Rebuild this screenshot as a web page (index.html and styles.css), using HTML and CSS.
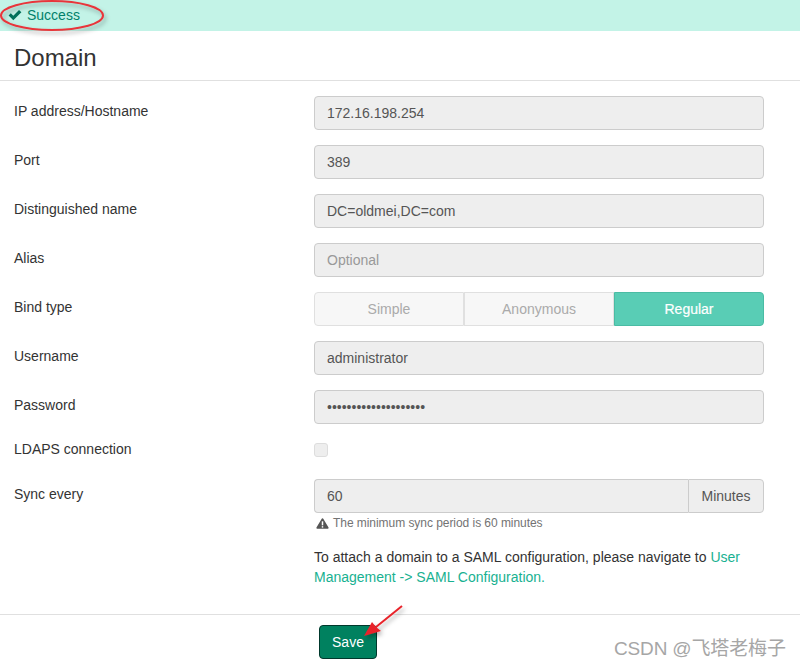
FILE: index.html
```html
<!DOCTYPE html>
<html lang="en">
<head>
<meta charset="utf-8">
<title>Domain</title>
<link rel="stylesheet" href="styles.css">
</head>
<body>
<div class="alert">
  <svg class="check" viewBox="0 0 14 12" width="14" height="12"><path d="M0.6 6.5 L2.8 4.3 L5.3 6.8 L11 1 L13.4 3.2 L5.3 11.2 Z" fill="#00715a"/></svg>
  <span>Success</span>
</div>
<h1 class="title">Domain</h1>
<form class="form">
  <div class="row"><label class="lbl">IP address/Hostname</label><input class="field" value="172.16.198.254" disabled></div>
  <div class="row"><label class="lbl">Port</label><input class="field" value="389" disabled></div>
  <div class="row"><label class="lbl">Distinguished name</label><input class="field" value="DC=oldmei,DC=com" disabled></div>
  <div class="row"><label class="lbl">Alias</label><input class="field" placeholder="Optional" disabled></div>
  <div class="row"><label class="lbl">Bind type</label>
    <div class="seg">
      <div class="seg-btn">Simple</div>
      <div class="seg-btn">Anonymous</div>
      <div class="seg-btn on">Regular</div>
    </div>
  </div>
  <div class="row"><label class="lbl">Username</label><input class="field" value="administrator" disabled></div>
  <div class="row"><label class="lbl">Password</label><input class="field" type="password" value="aaaaaaaaaaaaaaaaaaaa" disabled></div>
  <div class="row row-check"><label class="lbl">LDAPS connection</label><div class="checkbox"></div></div>
  <div class="row row-sync"><label class="lbl">Sync every</label>
    <div class="sync">
      <div class="group">
        <input class="field joined" value="60" disabled>
        <div class="addon">Minutes</div>
      </div>
      <div class="help">
        <svg viewBox="0 0 14 12" width="13" height="11"><path d="M7 0.3 Q7.7 0.3 8 1 L13.6 10.4 Q14 11.6 13 11.7 L1 11.7 Q0 11.6 0.4 10.4 L6 1 Q6.3 0.3 7 0.3 Z" fill="#555"/><rect x="6.2" y="3.6" width="1.6" height="4.4" fill="#fff"/><rect x="6.2" y="8.9" width="1.6" height="1.6" fill="#fff"/></svg>
        <span>The minimum sync period is 60 minutes</span>
      </div>
      <p class="note">To attach a domain to a SAML configuration, please navigate to <a href="#">User Management -&gt; SAML Configuration.</a></p>
    </div>
  </div>
  <div class="footer"><button type="button" class="save">Save</button></div>
</form>
<svg class="marks" width="800" height="667" viewBox="0 0 800 667">
  <defs><filter id="sh" x="-20%" y="-40%" width="140%" height="200%"><feDropShadow dx="2" dy="3" stdDeviation="2" flood-color="#000" flood-opacity=".3"/></filter></defs>
  <ellipse cx="52" cy="15.5" rx="51" ry="14.5" fill="none" stroke="#e8353a" stroke-width="2" filter="url(#sh)"/>
  <g filter="url(#sh)">
    <path d="M402 606 L376 627" stroke="#e8232a" stroke-width="2" fill="none"/>
    <path d="M364 636 L372 622 L376 627 L381 631 Z" fill="#e8232a"/>
  </g>
</svg>
<div class="watermark">CSDN @飞塔老梅子</div>
</body>
</html>
```
FILE: styles.css
```css
* { box-sizing: border-box; }
html, body { margin: 0; padding: 0; }
body {
  width: 800px;
  height: 667px;
  overflow: hidden;
  background: #fff;
  color: #333;
  font: 14px/20px "Liberation Sans", Arial, sans-serif;
  position: relative;
}
.alert {
  height: 31px;
  background: #c3f3e7;
  color: #00816a;
  display: flex;
  align-items: center;
  gap: 5px;
  padding: 0 0 1px 8px;
}
.check { display: block; }
.title {
  margin: 0;
  height: 50px;
  padding: 11px 14px 0;
  border-bottom: 1px solid #e0e0e0;
  font-size: 24px;
  line-height: 31px;
  font-weight: 400;
  color: #333;
}
.form { display: block; padding-top: 15px; }
.row {
  display: flex;
  padding: 0 36px 0 14px;
  margin-bottom: 15px;
}
.lbl { width: 300px; flex: none; padding-top: 5px; }
.field {
  flex: 1;
  width: 450px;
  height: 34px;
  padding: 0 12px;
  border: 1px solid #ccc;
  border-radius: 4px;
  background: #eee;
  color: #555;
  font: 14px "Liberation Sans", Arial, sans-serif;
  opacity: 1;
  -webkit-text-fill-color: #555;
}
.field::placeholder { color: #999; -webkit-text-fill-color: #999; opacity: 1; }
.seg { display: flex; width: 450px; height: 34px; }
.seg-btn {
  flex: 1;
  display: flex;
  align-items: center;
  justify-content: center;
  background: #f7f7f7;
  border: 1px solid #e0e0e0;
  color: #aaa;
}
.seg-btn:first-child { border-radius: 4px 0 0 4px; }
.seg-btn:last-child { border-radius: 0 4px 4px 0; }
.seg-btn.on {
  background: #59cdb5;
  border-color: #4abca4;
  color: #fff;
  -webkit-text-stroke: 0.2px #fff;
}
.row-check { height: 25px; align-items: flex-start; }
.row-check .lbl { padding-top: 0; }
.checkbox {
  width: 14px;
  height: 14px;
  margin-top: 4px;
  border: 1px solid #ddd;
  border-radius: 3px;
  background: #eee;
}
.sync { width: 450px; }
.group { display: flex; height: 34px; }
.joined { border-radius: 4px 0 0 4px; border-right: 0; }
.addon {
  width: 76px;
  flex: none;
  display: flex;
  align-items: center;
  justify-content: center;
  background: #eee;
  border: 1px solid #ccc;
  border-radius: 0 4px 4px 0;
  color: #555;
}
.help {
  display: flex;
  align-items: center;
  gap: 4px;
  height: 18px;
  margin-top: 1px;
  padding-left: 2px;
  font-size: 12px;
  letter-spacing: -0.05px;
  color: #737373;
}
.note { margin: 15px 0 0; color: #333; }
.note a { color: #18b191; text-decoration: none; }
.footer {
  position: absolute;
  left: 0;
  right: 0;
  top: 614px;
  border-top: 1px solid #e0e0e0;
  padding: 10px 0 0 319px;
}
.save {
  display: block;
  width: 58px;
  height: 34px;
  padding: 0;
  border: 1px solid #00382c;
  border-radius: 4px;
  background: #00815f;
  color: #fff;
  font: 14px "Liberation Sans", Arial, sans-serif;
}
.marks { position: absolute; left: 0; top: 0; pointer-events: none; }
.watermark {
  position: absolute;
  left: 614px;
  top: 638px;
  font: 19px/22px "Liberation Sans", "Noto Sans CJK SC", sans-serif;
  letter-spacing: -0.15px;
  color: #a6a6a6;
  white-space: nowrap;
}
```
